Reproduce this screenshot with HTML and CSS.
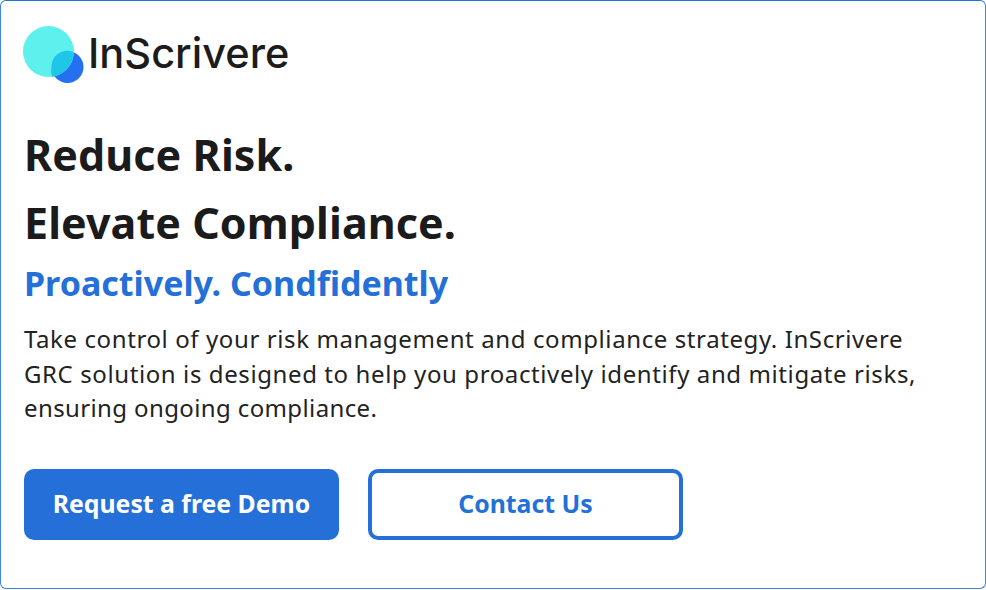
FILE: index.html
```html
<!DOCTYPE html>
<html lang="en">
<head>
<meta charset="utf-8">
<title>InScrivere</title>
<link rel="stylesheet" href="styles.css">
</head>
<body>
<main class="card">
  <div class="brand">
    <svg class="logo" width="62" height="60" viewBox="0 0 62 60" aria-hidden="true">
      <circle cx="44.5" cy="41" r="16" fill="#2570f0"/>
      <circle cx="25.5" cy="25.5" r="25.5" fill="#5ef0ec"/>
      <path d="M30 33.7 A16 16 0 0 1 50.8 26.3 A25.5 25.5 0 0 1 29.2 50.7 A16 16 0 0 1 28.5 41 A16 16 0 0 1 30 33.7 Z" fill="#1fc6e8"/>
    </svg>
    <span class="brand-name">InScrivere</span>
  </div>
  <h1 class="headline">Reduce Risk.</h1>
  <h1 class="headline headline-second">Elevate Compliance.</h1>
  <h2 class="tagline">Proactively. Condfidently</h2>
  <p class="body-text">Take control of your risk management and compliance strategy. InScrivere<br>GRC solution is designed to help you proactively identify and mitigate risks,<br><span class="body-last">ensuring ongoing compliance.</span></p>
  <div class="actions">
    <a class="btn btn-solid">Request a free Demo</a>
    <a class="btn btn-outline">Contact Us</a>
  </div>
</main>
</body>
</html>
```
FILE: styles.css
```css
* { box-sizing: border-box; }
html, body { margin: 0; padding: 0; background: #fff; }
body { font-family: "Noto Sans", "Open Sans", sans-serif; color: #1b1b1b; }
.card {
  width: 986px;
  height: 589px;
  border: 1px solid #3f85e3;
  border-top-color: #2470d8;
  border-radius: 6px;
  padding: 25px 23px 0 23px;
  display: flex;
  flex-direction: column;
  align-items: flex-start;
}
.brand { display: flex; align-items: flex-start; height: 60px; }
.logo { margin-left: -1px; flex: none; }
.brand-name {
  font-family: "Inter", "Noto Sans", sans-serif;
  font-size: 41.5px;
  font-weight: 550;
  line-height: 54px;
  letter-spacing: 0.02px;
  margin-left: 3px;
  color: #1c1c1c;
}
.headline {
  margin: 39px 0 0 0;
  font-size: 43px;
  line-height: 60px;
  font-weight: 700;
  letter-spacing: 0.08px;
  color: #1b1b1b;
}
.headline-second { margin-top: 8px; }
.tagline {
  margin: 7px 0 0 0;
  font-size: 34px;
  line-height: 46px;
  font-weight: 700;
  color: #2470d8;
}
.body-text {
  margin: 16px 0 0 0;
  font-size: 24px;
  letter-spacing: 0.6px;
  line-height: 34.5px;
  color: #222;
}
.body-last { letter-spacing: 0.38px; }
.actions { display: flex; gap: 29px; margin-top: 43px; }
.btn {
  width: 315px;
  height: 71px;
  border-radius: 10px;
  display: flex;
  align-items: center;
  justify-content: center;
  padding-bottom: 3px;
  font-size: 24.8px;
  font-weight: 700;
}
.btn-solid { background: #2470d8; color: #fff; }
.btn-outline { border: 4px solid #2470d8; color: #2470d8; }
```
